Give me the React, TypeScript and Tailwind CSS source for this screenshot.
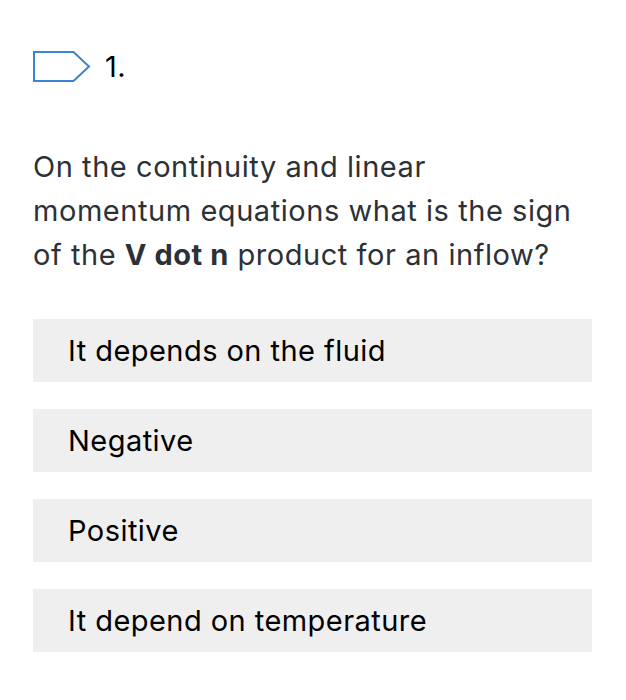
import React from 'react';

const options = [
  'It depends on the fluid',
  'Negative',
  'Positive',
  'It depend on temperature',
];

const App: React.FC = () => {
  return (
    <div
      className="w-[626px] h-[700px] bg-white pl-[33px] pr-[33px]"
      style={{ fontFamily: 'Inter, "Liberation Sans", sans-serif' }}
    >
      {/* question number */}
      <div className="flex items-center pt-[51px] h-[82px]">
        <svg width="58" height="31" viewBox="0 0 58 31" className="shrink-0">
          <path
            d="M1 1 H40.5 L56 15.5 L40.5 30 H1 Z"
            fill="none"
            stroke="#3d83d3"
            strokeWidth="2"
            strokeLinejoin="miter"
          />
        </svg>
        <span className="ml-[14px] text-[29px] leading-none text-black tracking-[0.5px]">1.</span>
      </div>

      {/* question */}
      <p className="mt-[63px] whitespace-nowrap text-[29px] leading-[44px] text-[#2b3137] tracking-[0.55px]">
        On the continuity and linear
        <br />
        momentum equations what is the sign
        <br />
        of the <span className="font-bold">V dot n</span> product for an inflow?
      </p>

      {/* answers */}
      <div className="mt-[42px] flex flex-col gap-[27px] w-[559px]">
        {options.map((opt, i) => (
          <div
            key={i}
            className="h-[63px] bg-[#efefef] flex items-center pl-[35px] text-[29px] text-black tracking-[0.45px]"
          >
            {opt}
          </div>
        ))}
      </div>
    </div>
  );
};

export default App;
